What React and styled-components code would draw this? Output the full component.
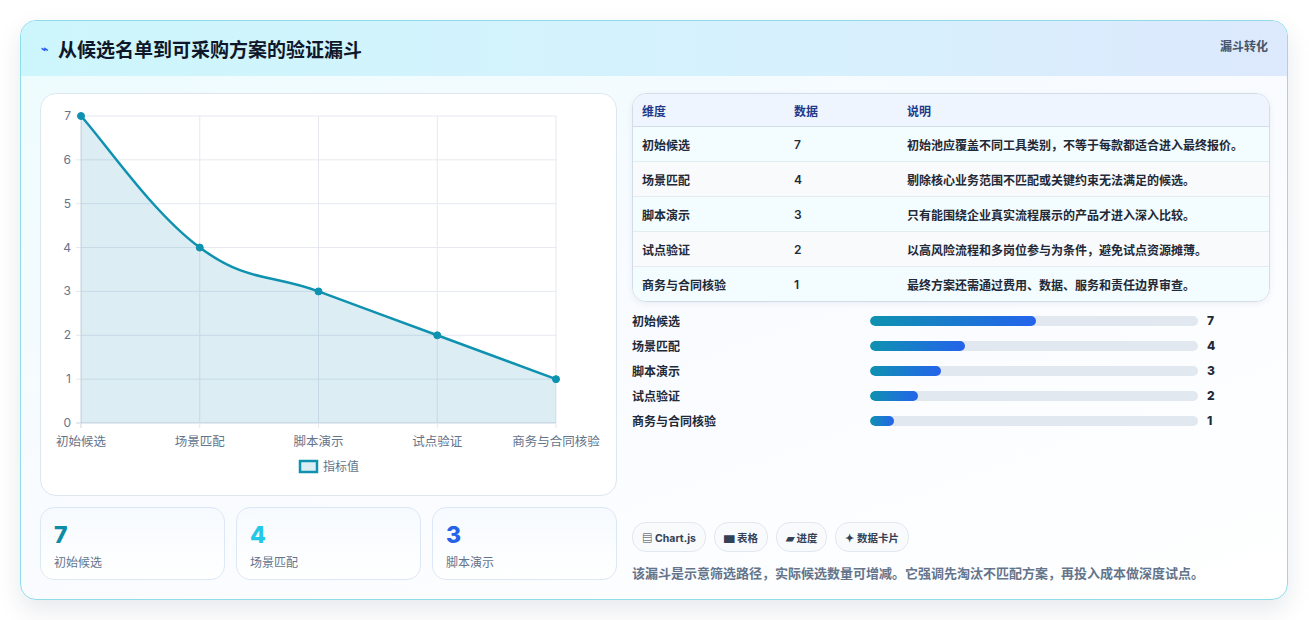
import React from 'react';
import styled, { createGlobalStyle } from 'styled-components';

const Global = createGlobalStyle`
  body { margin: 0; background: #ffffff; font-family: Inter, "Noto Sans CJK SC", sans-serif; }
`;

const Page = styled.div`
  padding: 20px 21px 20px 20px;
  height: 620px;
  box-sizing: border-box;
`;

const Card = styled.div`
  border: 1px solid #8fdcea;
  border-radius: 16px;
  overflow: hidden;
  background: linear-gradient(160deg, #ecfcfe 0%, #f8fbff 45%, #ffffff 100%);
  box-shadow: 0 10px 24px rgba(15, 40, 70, 0.1);
  height: 580px;
  box-sizing: border-box;
`;

const Header = styled.div`
  height: 55px;
  display: flex;
  align-items: center;
  justify-content: space-between;
  padding: 0 19px 0 20px;
  background: linear-gradient(90deg, #cdf6fc 0%, #d6f1fd 60%, #dde9fd 100%);
`;

const Title = styled.h1`
  margin: 0;
  display: flex;
  align-items: center;
  gap: 10px;
  font-size: 19px;
  font-weight: 700;
  color: #0f172a;
`;

const Tag = styled.span`
  align-self: flex-start;
  margin-top: 16px;
  font-size: 12px;
  font-weight: 700;
  color: #475569;
`;

const Body = styled.div`
  display: grid;
  grid-template-columns: 577px 638px;
  gap: 15px;
  padding: 17px 19px 0 19px;
`;

const Col = styled.div`
  display: flex;
  flex-direction: column;
`;

const ChartPanel = styled.div`
  height: 403px;
  border: 1px solid #dde7f0;
  border-radius: 16px;
  background: #fff;
  box-sizing: border-box;
  overflow: hidden;
`;

const Stats = styled.div`
  display: grid;
  grid-template-columns: repeat(3, 1fr);
  gap: 11px;
  margin-top: 11px;
`;

const Stat = styled.div`
  height: 73px;
  border: 1px solid #dce8f5;
  border-radius: 14px;
  background: linear-gradient(180deg, #f6fafe, #ffffff);
  padding: 14px 13px 0;
  box-sizing: border-box;
`;

const StatNum = styled.div`
  font-size: 23px;
  font-weight: 800;
  line-height: 26px;
  color: ${p => p.$c};
`;

const StatLabel = styled.div`
  margin-top: 5px;
  font-size: 12px;
  color: #64748b;
`;

const Table = styled.table`
  width: 100%;
  border-collapse: separate;
  border-spacing: 0;
  border: 1px solid #d3dde8;
  border-radius: 14px;
  overflow: hidden;
  font-size: 12px;
  box-shadow: 0 2px 6px rgba(15, 40, 70, 0.06);
`;

const Th = styled.th`
  text-align: left;
  font-weight: 700;
  color: #1e3a8a;
  height: 32px;
  padding: 0 9px;
  background: #eef5fe;
  border-bottom: 1px solid #d3dde8;
  width: ${p => p.$w || 'auto'};
`;

const Td = styled.td`
  height: 34px;
  padding: 0 9px;
  font-weight: 600;
  color: #1f2937;
  background: ${p => (p.$odd ? '#f3fcfe' : '#f8fafc')};
  border-top: ${p => (p.$first ? 'none' : '1px solid #e5ebf2')};
`;

const Bars = styled.div`
  display: flex;
  flex-direction: column;
  gap: 8px;
  margin-top: 10px;
`;

const BarRow = styled.div`
  display: grid;
  grid-template-columns: 238px 328px 1fr;
  align-items: center;
  height: 17px;
`;

const BarLabel = styled.span`
  font-size: 12px;
  font-weight: 600;
  color: #1f2937;
`;

const Track = styled.div`
  height: 10px;
  border-radius: 5px;
  background: #e2e8f0;
  overflow: hidden;
`;

const Fill = styled.div`
  height: 100%;
  border-radius: 5px;
  background: linear-gradient(90deg, #0e92b0, #2563eb);
`;

const BarVal = styled.span`
  padding-left: 9px;
  font-size: 12px;
  font-weight: 800;
  color: #1f2937;
`;

const Chips = styled.div`
  display: flex;
  gap: 8px;
  margin-top: 93px;
`;

const Chip = styled.span`
  height: 28px;
  padding: 0 9px;
  display: inline-flex;
  align-items: center;
  gap: 3px;
  border: 1px solid #e2e8f0;
  border-radius: 14px;
  background: #f8fafc;
  font-size: 10.5px;
  font-weight: 700;
  color: #334155;
`;

const Note = styled.p`
  margin: 11px 0 0;
  font-size: 13px;
  font-weight: 600;
  color: #64748b;
`;

const stages = [
  ['初始候选', 7, '初始池应覆盖不同工具类别，不等于每款都适合进入最终报价。'],
  ['场景匹配', 4, '剔除核心业务范围不匹配或关键约束无法满足的候选。'],
  ['脚本演示', 3, '只有能围绕企业真实流程展示的产品才进入深入比较。'],
  ['试点验证', 2, '以高风险流程和多岗位参与为条件，避免试点资源摊薄。'],
  ['商务与合同核验', 1, '最终方案还需通过费用、数据、服务和责任边界审查。'],
];

// chart coordinates relative to panel
const X0 = 40, X1 = 515, Y0 = 22, YB = 329;
const px = i => X0 + (i * (X1 - X0)) / 4;
const py = v => YB - (v * (YB - Y0)) / 7;

function smoothPath(pts) {
  let d = `M${pts[0][0]},${pts[0][1]}`;
  for (let i = 0; i < pts.length - 1; i++) {
    const p0 = pts[i - 1] || pts[i];
    const p1 = pts[i];
    const p2 = pts[i + 1];
    const p3 = pts[i + 2] || p2;
    const t = 0.2;
    const c1 = [p1[0] + (p2[0] - p0[0]) * t, p1[1] + (p2[1] - p0[1]) * t];
    const c2 = [p2[0] - (p3[0] - p1[0]) * t, p2[1] - (p3[1] - p1[1]) * t];
    d += ` C${c1[0]},${c1[1]} ${c2[0]},${c2[1]} ${p2[0]},${p2[1]}`;
  }
  return d;
}

function Chart() {
  const pts = stages.map((s, i) => [px(i), py(s[1])]);
  const line = smoothPath(pts);
  const area = `${line} L${X1},${YB} L${X0},${YB} Z`;
  const txt = { fontFamily: 'Inter, "Noto Sans CJK SC", sans-serif', fill: '#64748b' };
  return (
    <svg width="576" height="401">
      {[0, 1, 2, 3, 4, 5, 6, 7].map(v => (
        <g key={v}>
          <line x1={X0 - 5} x2={X1} y1={py(v)} y2={py(v)} stroke={v === 0 ? '#cbd5e1' : '#e5e9ef'} />
          <text x={X0 - 10} y={py(v) + 4} textAnchor="end" fontSize="12" style={txt}>{v}</text>
        </g>
      ))}
      {stages.map((s, i) => (
        <g key={s[0]}>
          <line x1={px(i)} x2={px(i)} y1={Y0} y2={YB + 5} stroke={i === 0 ? '#cbd5e1' : '#e5e9ef'} />
          <text x={px(i)} y={YB + 23} textAnchor="middle" fontSize="12.5" style={txt}>{s[0]}</text>
        </g>
      ))}
      <path d={area} fill="rgba(40,140,185,0.16)" />
      <path d={line} fill="none" stroke="#0e92b0" strokeWidth="2.5" />
      {pts.map((p, i) => (
        <circle key={i} cx={p[0]} cy={p[1]} r="3.5" fill="#0e92b0" stroke="#0e92b0" />
      ))}
      <rect x="259" y="367" width="17" height="11" fill="#dbeef4" stroke="#0e92b0" strokeWidth="2.5" />
      <text x="282" y="377" fontSize="12" style={txt}>指标值</text>
    </svg>
  );
}

export default function App() {
  return (
    <Page>
      <Global />
      <Card>
        <Header>
          <Title>
            <span style={{ color: '#2563eb', fontSize: 12 }}>⌁</span>
            从候选名单到可采购方案的验证漏斗
          </Title>
          <Tag>漏斗转化</Tag>
        </Header>
        <Body>
          <Col>
            <ChartPanel>
              <Chart />
            </ChartPanel>
            <Stats>
              <Stat><StatNum $c="#0e8ba5">7</StatNum><StatLabel>初始候选</StatLabel></Stat>
              <Stat><StatNum $c="#22c8e6">4</StatNum><StatLabel>场景匹配</StatLabel></Stat>
              <Stat><StatNum $c="#2563eb">3</StatNum><StatLabel>脚本演示</StatLabel></Stat>
            </Stats>
          </Col>
          <Col>
            <Table>
              <thead>
                <tr><Th $w="134px">维度</Th><Th $w="95px">数据</Th><Th>说明</Th></tr>
              </thead>
              <tbody>
                {stages.map((s, i) => (
                  <tr key={s[0]}>
                    <Td $odd={i % 2 === 0} $first={i === 0}>{s[0]}</Td>
                    <Td $odd={i % 2 === 0} $first={i === 0}>{s[1]}</Td>
                    <Td $odd={i % 2 === 0} $first={i === 0}>{s[2]}</Td>
                  </tr>
                ))}
              </tbody>
            </Table>
            <Bars>
              {stages.map(s => (
                <BarRow key={s[0]}>
                  <BarLabel>{s[0]}</BarLabel>
                  <Track><Fill style={{ width: `${(s[1] / 13.8) * 100}%` }} /></Track>
                  <BarVal>{s[1]}</BarVal>
                </BarRow>
              ))}
            </Bars>
            <Chips>
              <Chip>▤ Chart.js</Chip>
              <Chip>▆ 表格</Chip>
              <Chip>▰ 进度</Chip>
              <Chip>✦ 数据卡片</Chip>
            </Chips>
            <Note>该漏斗是示意筛选路径，实际候选数量可增减。它强调先淘汰不匹配方案，再投入成本做深度试点。</Note>
          </Col>
        </Body>
      </Card>
    </Page>
  );
}
